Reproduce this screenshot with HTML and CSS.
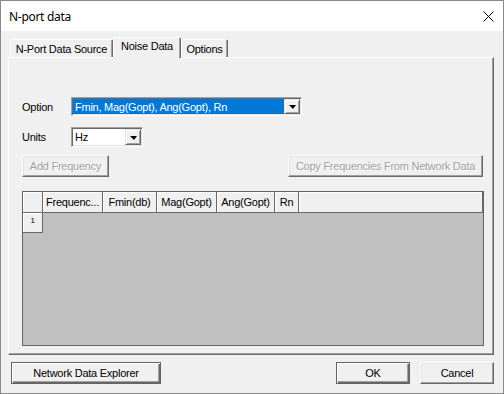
FILE: index.html
```html
<!DOCTYPE html>
<html>
<head>
<meta charset="utf-8">
<link rel="stylesheet" href="styles.css">
</head>
<body>
<div class="window">
  <div class="titlebar">
    <span class="title">N-port data</span>
    <svg class="close" width="11" height="11" viewBox="0 0 11 11"><path d="M0.5 0.5 L10.5 10.5 M10.5 0.5 L0.5 10.5" stroke="#000" stroke-width="1" fill="none"/></svg>
  </div>
  <div class="body">
    <div class="tabs">
      <div class="tab t1">N-Port Data Source</div>
      <div class="tab t2 selected">Noise Data</div>
      <div class="tab t3">Options</div>
    </div>
    <div class="panel">
      <div class="row row-option">
        <span class="label">Option</span>
        <div class="select sel-option">
          <span class="value highlighted">Fmin, Mag(Gopt), Ang(Gopt), Rn</span>
          <span class="drop"><span class="tri"></span></span>
        </div>
      </div>
      <div class="row row-units">
        <span class="label">Units</span>
        <div class="select sel-units">
          <span class="value">Hz</span>
          <span class="drop"><span class="tri"></span></span>
        </div>
      </div>
      <div class="row row-buttons">
        <div class="btn disabled b-add">Add Frequency</div>
        <div class="btn disabled b-copy">Copy Frequencies From Network Data</div>
      </div>
      <div class="grid">
        <div class="grow ghead">
          <div class="gc c0"></div>
          <div class="gc c1">Frequenc...</div>
          <div class="gc c2">Fmin(db)</div>
          <div class="gc c3">Mag(Gopt)</div>
          <div class="gc c4">Ang(Gopt)</div>
          <div class="gc c5">Rn</div>
          <div class="gc c6"></div>
        </div>
        <div class="grow">
          <div class="gc c0 rh">1</div>
        </div>
      </div>
    </div>
    <div class="footer">
      <div class="btn default b-nde">Network Data Explorer</div>
      <div class="spacer"></div>
      <div class="btn default b-ok">OK</div>
      <div class="btn b-cancel">Cancel</div>
    </div>
  </div>
</div>
</body>
</html>
```
FILE: styles.css
```css
* { box-sizing: border-box; }
html, body { margin: 0; padding: 0; }
body {
  width: 504px;
  height: 394px;
  background: #fff;
  font-family: "Liberation Sans", Arial, sans-serif;
  font-size: 11px;
  color: #000;
}
.window {
  width: 504px;
  height: 394px;
  border: 1px solid #8a8a8a;
  background: #f0f0f0;
  display: flex;
  flex-direction: column;
}
.titlebar {
  height: 30px;
  flex: none;
  background: #fff;
  display: flex;
  align-items: center;
  justify-content: space-between;
  padding: 0 9px 0 8px;
}
.title {
  font-family: "Noto Sans", "Open Sans", sans-serif;
  font-size: 12px;
  letter-spacing: -0.3px;
  color: #000;
}
.body {
  padding: 6px 9px 0 7px;
  display: flex;
  flex-direction: column;
  letter-spacing: -0.25px;
}
.tabs {
  height: 20px;
  display: flex;
  align-items: flex-end;
  padding-left: 2px;
}
.tab {
  height: 18px;
  display: flex;
  align-items: center;
  justify-content: center;
  border-top: 1px solid #fff;
  border-left: 1px solid #fff;
  border-right: 1px solid #696969;
  box-shadow: inset -1px 0 #a0a0a0;
  border-radius: 2px 2px 0 0;
  padding-top: 1px;
  background: #f0f0f0;
}
.t1 { width: 103px; }
.t2 { width: 68px; }
.t3 { width: 47px; }
.tab.selected {
  height: 21px;
  margin-bottom: -1px;
  position: relative;
  z-index: 1;
  padding-top: 0;
  padding-bottom: 4px;
}
.panel {
  width: 486px;
  height: 298px;
  border-top: 1px solid #fff;
  border-left: 1px solid #fff;
  border-right: 1px solid #696969;
  border-bottom: 1px solid #696969;
  box-shadow: inset -1px -1px #a0a0a0;
  padding: 39px 10px 0 13px;
  display: flex;
  flex-direction: column;
}
.row {
  display: flex;
  align-items: center;
}
.label {
  width: 49px;
  flex: none;
}
.row-option { height: 19px; }
.row-units { height: 20px; margin-top: 11px; }
.row-buttons {
  height: 22px;
  margin-top: 8px;
  justify-content: space-between;
}
.select {
  height: 100%;
  display: flex;
  align-items: stretch;
  background: #fff;
  border-top: 1px solid #a0a0a0;
  border-left: 1px solid #a0a0a0;
  border-right: 1px solid #fff;
  border-bottom: 1px solid #fff;
  box-shadow: inset 1px 1px #696969, inset -1px -1px #e3e3e3;
  padding: 1px;
}
.sel-option { width: 231px; }
.sel-units { width: 72px; }
.value {
  flex: 1;
  display: flex;
  align-items: center;
  padding-left: 2px;
  white-space: nowrap;
  overflow: hidden;
}
.value.highlighted {
  background: #0078d7;
  color: #fff;
}
.drop {
  width: 16px;
  flex: none;
  display: flex;
  align-items: center;
  justify-content: center;
  background: #f0f0f0;
  border-top: 1px solid #e3e3e3;
  border-left: 1px solid #e3e3e3;
  border-right: 1px solid #696969;
  border-bottom: 1px solid #696969;
  box-shadow: inset 1px 1px #fff, inset -1px -1px #a0a0a0;
}
.tri {
  width: 0;
  height: 0;
  border-left: 4px solid transparent;
  border-right: 3px solid transparent;
  border-top: 4px solid #000;
  margin-top: 1px;
}
.btn {
  height: 22px;
  display: flex;
  align-items: center;
  justify-content: center;
  background: #f0f0f0;
  border-top: 1px solid #fff;
  border-left: 1px solid #fff;
  border-right: 1px solid #696969;
  border-bottom: 1px solid #696969;
  box-shadow: inset -1px -1px #a0a0a0, inset 1px 1px #e3e3e3;
  white-space: nowrap;
}
.btn.disabled {
  color: #a0a0a0;
  text-shadow: 1px 1px 0 #fff;
}
.btn.default {
  border: 1px solid #646464;
  box-shadow: inset 1px 1px #fff, inset -1px -1px #696969, inset -2px -2px #a0a0a0;
}
.b-add { width: 87px; }
.b-copy { width: 195px; }
.grid {
  margin-top: 14px;
  width: 462px;
  height: 155px;
  border: 1px solid #646464;
  background: #c0c0c0;
  display: flex;
  flex-direction: column;
}
.grow { display: flex; }
.ghead { height: 21px; }
.gc {
  height: 100%;
  display: flex;
  align-items: center;
  justify-content: center;
  background: #f0f0f0;
  border-right: 1px solid #696969;
  border-bottom: 1px solid #696969;
  box-shadow: inset 1px 1px #fff;
  white-space: nowrap;
  overflow: hidden;
}
.c0 { width: 20px; }
.c1 { width: 60px; }
.c2 { width: 54px; }
.c3 { width: 60px; }
.c4 { width: 58px; }
.c5 { width: 24px; }
.c6 { width: 184px; }
.rh {
  height: 20px;
  font-size: 8px;
  align-items: flex-start;
  padding-top: 3px;
}
.footer {
  display: flex;
  margin-top: 7px;
  padding-left: 3px;
}
.spacer { flex: 1; }
.b-nde { width: 150px; }
.b-ok { width: 74px; margin-right: 10px; }
.b-cancel { width: 74px; }
```
